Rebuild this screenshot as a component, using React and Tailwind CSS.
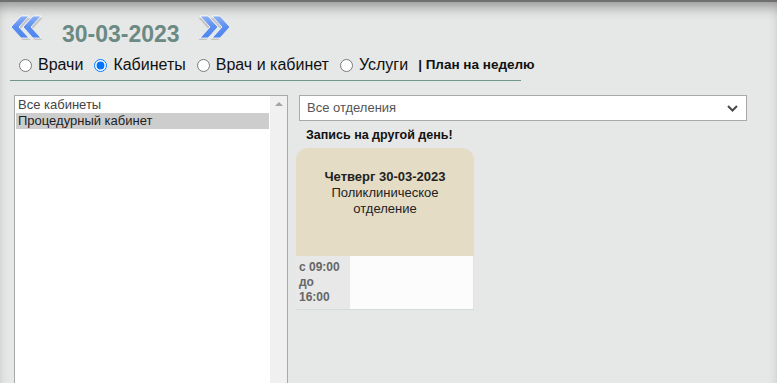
import React from 'react';

const DoubleArrow = ({ dir = 'left', className = '' }) => {
  const left = [
    '1,12 11,1 19,1 9,12 19,23 11,23',
    '13,12 23,1 31,1 21,12 31,23 23,23',
  ];
  const flip = dir === 'right' ? 'translate(34 0) scale(-1 1)' : undefined;
  return (
    <svg width="36" height="26" viewBox="0 0 36 26" className={className}>
      <defs>
        <linearGradient id={`g-${dir}`} x1="0" y1="0" x2="0" y2="1">
          <stop offset="0" stopColor="#8db0f6" />
          <stop offset="0.5" stopColor="#5a8ef0" />
          <stop offset="1" stopColor="#4f86ee" />
        </linearGradient>
      </defs>
      <g transform={flip}>
        {/* shadow */}
        <g transform="translate(1.5 2)" fill="#c4c4c4">
          {left.map((p) => <polygon key={p} points={p} />)}
        </g>
        <g fill={`url(#g-${dir})`} stroke="#ffffff" strokeWidth="0.8">
          {left.map((p) => <polygon key={p} points={p} />)}
        </g>
      </g>
    </svg>
  );
};

const tabs = [
  { label: 'Врачи', checked: false },
  { label: 'Кабинеты', checked: true },
  { label: 'Врач и кабинет', checked: false },
  { label: 'Услуги', checked: false },
];

export default function App() {
  return (
    <div className="h-screen overflow-hidden bg-[#e6e8e7] border-t-2 border-[#6f6f6f] shadow-[inset_0_10px_14px_-6px_rgba(0,0,0,0.4)] font-['Liberation_Sans',Arial,sans-serif]">
      {/* Date header */}
      <div className="flex items-start pt-[13px] pl-[10px]">
        <DoubleArrow dir="left" />
        <span className="ml-[16px] mt-[8px] text-[23px] leading-none font-bold text-[#6b8a84]">
          30-03-2023
        </span>
        <DoubleArrow dir="right" className="ml-[17px]" />
      </div>

      {/* Mode switch */}
      <div className="flex items-center h-[16px] mt-[11px] pl-[19px] text-[16px] leading-[16px] text-[#111]">
        {tabs.map((t, i) => (
          <label key={t.label} className={`flex items-center ${i > 0 ? 'ml-[11px]' : ''}`}>
            <input type="radio" name="mode" defaultChecked={t.checked} className="m-0 w-[13px] h-[13px]" />
            <span className="ml-[6px]">{t.label}</span>
          </label>
        ))}
        <span className="ml-[10px] text-[13.5px] font-bold">| План на неделю</span>
      </div>

      <div className="ml-[10px] mt-[7px] w-[511px] h-px bg-[#6e978c]" />

      {/* Content */}
      <div className="flex items-start mt-[14px]">
        {/* Cabinet list */}
        <div className="ml-[14px] w-[274px] h-[300px] border border-[#a9a9a9] bg-white flex">
          <div className="flex-1 pt-px px-px text-[13px] leading-[16px]">
            <div className="pl-[2px] h-[16px] text-[#444]">Все кабинеты</div>
            <div className="pl-[2px] h-[16px] bg-[#cdcdcd] text-[#222]">Процедурный кабинет</div>
          </div>
          <div className="w-[17px] bg-[#f0f0f0] flex justify-center pt-[6px]">
            <div className="w-0 h-0 border-x-[4px] border-x-transparent border-b-[4px] border-b-[#a3a3a3]" />
          </div>
        </div>

        {/* Right side */}
        <div className="ml-[11px] w-[448px]">
          <div className="h-[26px] border border-[#a9a9a9] bg-white flex items-center justify-between pl-[7px] pr-[8px] text-[13px] text-[#555]">
            <span>Все отделения</span>
            <svg width="11" height="7" viewBox="0 0 11 7">
              <path d="M1 1 L5.5 5.5 L10 1" fill="none" stroke="#4a4a4a" strokeWidth="2" />
            </svg>
          </div>

          <div className="mt-[6px] pl-[7px] text-[12.5px] leading-[16px] font-bold text-[#111]">
            Запись на другой день!
          </div>

          {/* Day card */}
          <div className="mt-[5px] -ml-[3px] w-[178px]">
            <div className="h-[108px] bg-[#e5dcc5] rounded-t-[12px] pt-[21px] text-center text-[13px] leading-[16px] text-[#222]">
              <div className="font-bold">Четверг 30-03-2023</div>
              <div>Поликлиническое</div>
              <div>отделение</div>
            </div>
            <div className="flex h-[54px] border-b border-[#d3dcd9]">
              <div className="w-[54px] bg-[#e7e8e7] pl-[3px] pt-[4px] text-[12px] leading-[15px] font-bold text-[#666]">
                <div>с 09:00</div>
                <div>до</div>
                <div>16:00</div>
              </div>
              <div className="flex-1 bg-[#fcfcfc] border-r border-[#dfe4e2]" />
            </div>
          </div>
        </div>
      </div>
    </div>
  );
}
